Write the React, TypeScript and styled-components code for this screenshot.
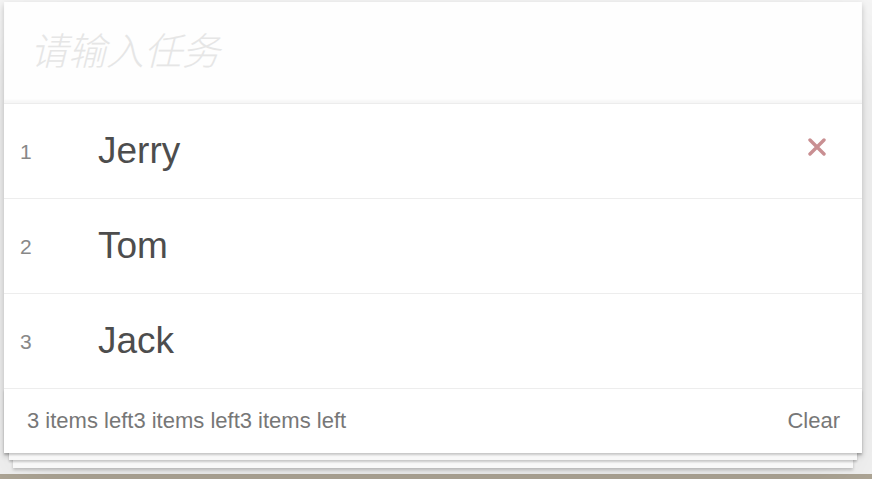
import { FC } from 'react';
import styled, { createGlobalStyle } from 'styled-components';

const GlobalStyle = createGlobalStyle({
  'html, body': {
    margin: 0,
    padding: 0,
    background: '#f5f5f5',
    fontFamily: '"Liberation Sans", Arial, "Noto Sans CJK SC", sans-serif',
  },
  '*': {
    boxSizing: 'border-box',
  },
});

const Page = styled.div({
  display: 'flex',
  flexDirection: 'column',
  height: 479,
  overflow: 'hidden',
});

const TodoApp = styled.section({
  marginTop: 2,
  marginLeft: 4,
  width: 858,
  background: '#fff',
  position: 'relative',
  zIndex: 1,
  boxShadow: '0 3px 6px 0 rgba(0, 0, 0, 0.2), 0 38px 76px 0 rgba(0, 0, 0, 0.1)',
});

const NewTodo = styled.input({
  display: 'block',
  width: '100%',
  height: 102,
  margin: 0,
  padding: '0 26px',
  border: 'none',
  borderBottom: '1px solid #ececec',
  outline: 'none',
  background: 'rgba(0, 0, 0, 0.003)',
  boxShadow: 'inset 0 -3px 2px rgba(0, 0, 0, 0.03)',
  fontFamily: '"Liberation Sans", "Noto Sans CJK SC", sans-serif',
  fontSize: 38,
  color: '#4d4d4d',

  '&::placeholder': {
    fontStyle: 'italic',
    fontWeight: 300,
    color: '#e6e6e6',
  },
});

const TodoList = styled.ul({
  margin: 0,
  padding: 0,
  listStyle: 'none',
});

const TodoItem = styled.li({
  display: 'flex',
  alignItems: 'center',
  height: 95,
  padding: '0 36px 0 16px',
  borderBottom: '1px solid #ededed',
});

const Index = styled.span({
  width: 78,
  fontSize: 21,
  color: '#888',
  paddingTop: 2,
});

const Label = styled.label({
  flex: 1,
  fontSize: 37,
  color: '#4d4d4d',
  lineHeight: 1.2,
});

const Destroy = styled.button<{ $visible: boolean }>(({ $visible }) => ({
  display: 'flex',
  visibility: $visible ? 'visible' : 'hidden',
  margin: '-8px 0 0',
  padding: 0,
  border: 'none',
  background: 'none',
  color: '#c98f92',
  cursor: 'pointer',
}));

const Footer = styled.footer({
  display: 'flex',
  alignItems: 'center',
  justifyContent: 'space-between',
  height: 64,
  padding: '0 22px 0 23px',
  fontSize: 22,
  color: '#777',
  position: 'relative',

  '&::before': {
    content: '""',
    position: 'absolute',
    left: 0,
    right: 0,
    bottom: 0,
    height: 64,
    zIndex: -1,
    boxShadow:
      '0 2px 2px rgba(0, 0, 0, 0.2), 0 12px 0 -5px #f8f8f8, 0 14px 2px -5px rgba(0, 0, 0, 0.2), 0 24px 0 -9px #f8f8f8, 0 26px 3px -9px rgba(0, 0, 0, 0.2)',
  },
});

const ClearButton = styled.button({
  margin: 0,
  padding: 0,
  border: 'none',
  background: 'none',
  fontFamily: 'inherit',
  fontSize: 22,
  color: '#777',
  cursor: 'pointer',
});

const BottomBar = styled.div({
  marginTop: 'auto',
  height: 5,
  background: '#b0a898',
});

const CrossIcon: FC = () => (
  <svg width="18" height="18" viewBox="0 0 18 18">
    <path
      d="M2 2 L16 16 M16 2 L2 16"
      stroke="currentColor"
      strokeWidth="3.4"
      strokeLinecap="round"
      fill="none"
    />
  </svg>
);

const todos = [
  { id: 1, name: 'Jerry' },
  { id: 2, name: 'Tom' },
  { id: 3, name: 'Jack' },
];

const App: FC = () => {
  const left = `${todos.length} items left`;

  return (
    <Page>
      <GlobalStyle />
      <TodoApp>
        <NewTodo placeholder="请输入任务" />

        <TodoList>
          {todos.map((todo, i) => (
            <TodoItem key={todo.id}>
              <Index>{todo.id}</Index>
              <Label>{todo.name}</Label>
              <Destroy $visible={i === 0}>
                <CrossIcon />
              </Destroy>
            </TodoItem>
          ))}
        </TodoList>

        <Footer>
          <span>
            {left}
            {left}
            {left}
          </span>
          <ClearButton>Clear</ClearButton>
        </Footer>
      </TodoApp>
      <BottomBar />
    </Page>
  );
};

export default App;
